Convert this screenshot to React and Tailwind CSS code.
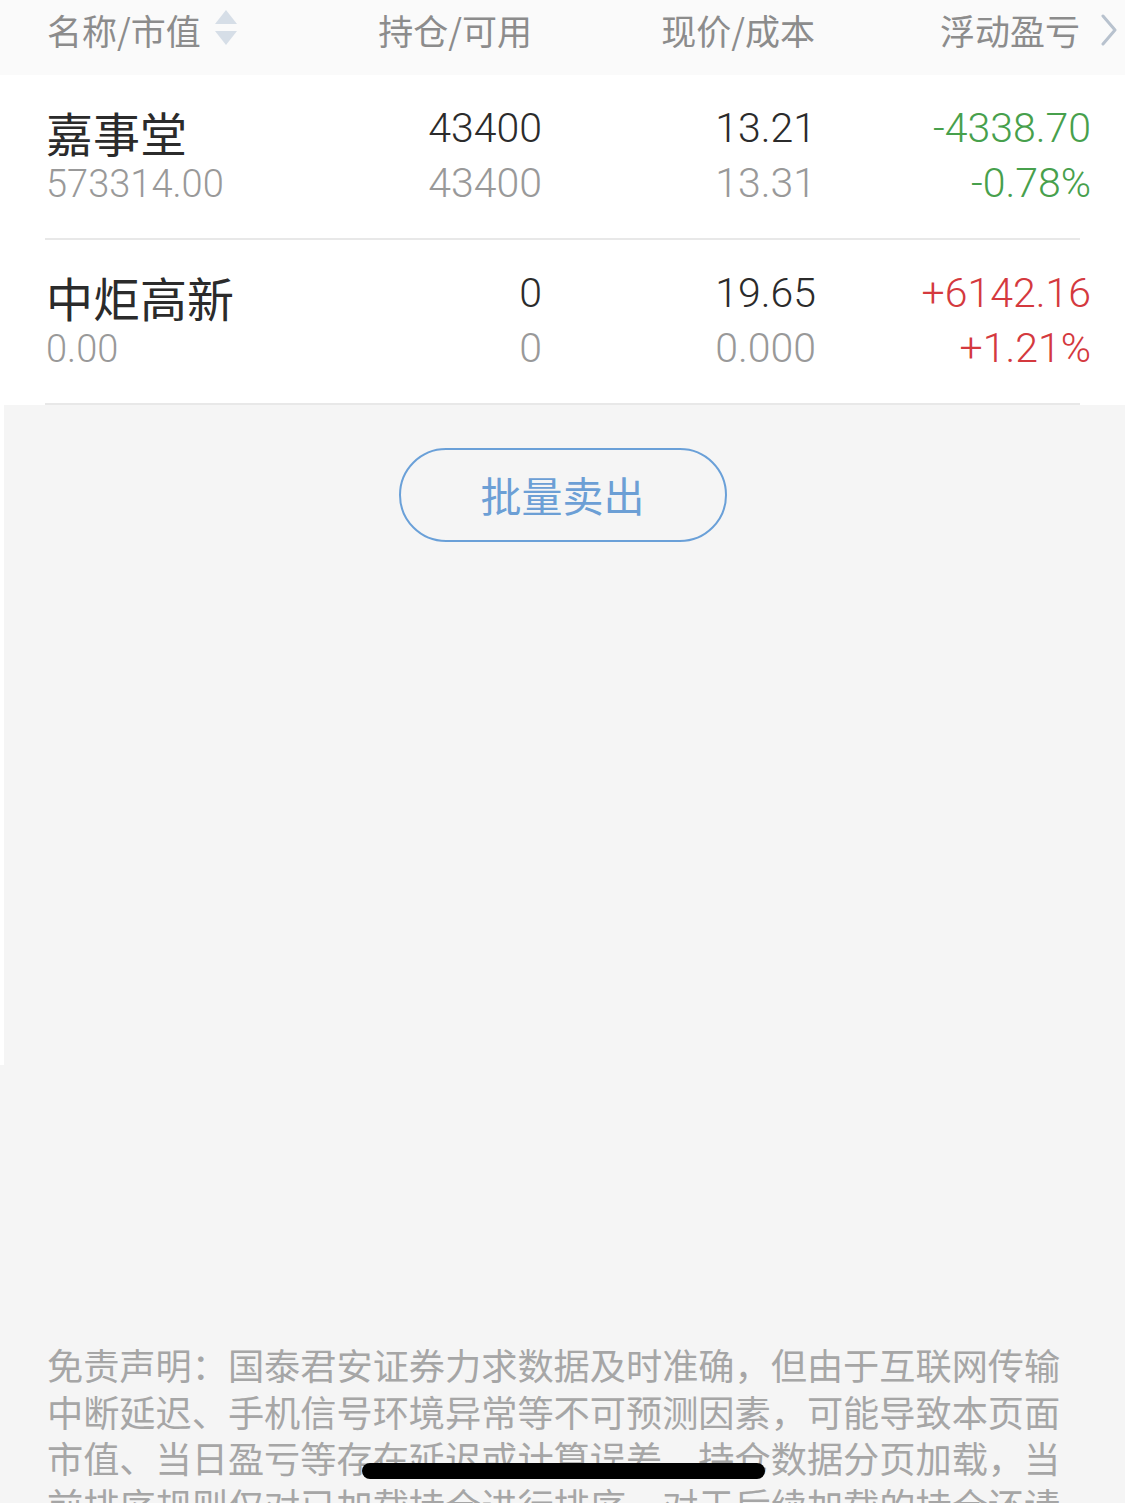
import React from "react";

const cjk = { fontFamily: '"Noto Sans CJK SC", "Noto Sans", sans-serif' };
const num = { fontFamily: 'Roboto, "Noto Sans", sans-serif' };

function SortIcon() {
  return (
    <svg width="22" height="36" viewBox="0 0 22 36" className="mt-[10px] ml-[14px] shrink-0">
      <polygon points="11,0 22,14 0,14" fill="#d6dee7" />
      <polygon points="0,21 22,21 11,35" fill="#d6dee7" />
    </svg>
  );
}

function Chevron() {
  return (
    <svg width="18" height="32" viewBox="0 0 18 32" className="mt-[14px] ml-[20px] shrink-0">
      <polyline points="3,2 15,16 3,30" fill="none" stroke="#b8c2ce" strokeWidth="3" strokeLinecap="round" strokeLinejoin="round" />
    </svg>
  );
}

function Row({ name, value, hold, avail, price, cost, pl, pct, color }) {
  return (
    <div className="bg-white">
      <div className="mx-[45px] h-[165px] border-b-2 border-[#e8e8e8] flex">
        <div className="w-[302px] shrink-0 pl-[1px] pt-[29px]">
          <div className="h-[56px] leading-[56px] text-[47px] text-[#2b2b2b]" style={cjk}>{name}</div>
          <div className="h-[48px] leading-[48px] text-[38px] font-light text-[#999999]" style={num}>{value}</div>
        </div>
        <div className="w-[195px] shrink-0 pt-[26px] text-right text-[41px] font-light" style={num}>
          <div className="h-[55px] leading-[55px] text-[#2b2b2b]">{hold}</div>
          <div className="h-[55px] leading-[55px] text-[#999999]">{avail}</div>
        </div>
        <div className="w-[274px] shrink-0 pt-[26px] text-right text-[41px] font-light" style={num}>
          <div className="h-[55px] leading-[55px] text-[#2b2b2b]">{price}</div>
          <div className="h-[55px] leading-[55px] text-[#999999]">{cost}</div>
        </div>
        <div className="w-[275px] shrink-0 pt-[26px] text-right text-[41px] font-light" style={{ ...num, color }}>
          <div className="h-[55px] leading-[55px]">{pl}</div>
          <div className="h-[55px] leading-[55px]">{pct}</div>
        </div>
      </div>
    </div>
  );
}

export default function App() {
  return (
    <div className="relative w-[1125px] h-[1503px] overflow-hidden bg-[#f5f5f5]">
      <div className="h-[75px] bg-[#fafafa] flex pl-[47px] text-[35px] text-[#8c8c8c]" style={cjk}>
        <div className="w-[300px] shrink-0 flex items-start">
          <span className="leading-[60px]">名称/市值</span>
          <SortIcon />
        </div>
        <div className="w-[185px] shrink-0 text-right leading-[60px]">持仓/可用</div>
        <div className="w-[283px] shrink-0 text-right leading-[60px]">现价/成本</div>
        <div className="w-[265px] shrink-0 text-right leading-[60px]">浮动盈亏</div>
        <Chevron />
      </div>
      <Row name="嘉事堂" value="573314.00" hold="43400" avail="43400" price="13.21" cost="13.31" pl="-4338.70" pct="-0.78%" color="#47a04c" />
      <Row name="中炬高新" value="0.00" hold="0" avail="0" price="19.65" cost="0.000" pl="+6142.16" pct="+1.21%" color="#d4393e" />
      <div className="flex">
        <div className="w-[4px] h-[660px] bg-white" />
        <div className="flex-1 flex flex-col items-center pt-[43px] pr-[4px]">
          <div className="w-[328px] h-[94px] rounded-full border-[2.5px] border-[#6aa0d8] flex items-center justify-center text-[41px] text-[#6c9fd5]" style={cjk}>
            批量卖出
          </div>
        </div>
      </div>
      <div className="mt-[276px] pl-[47px] w-[1082px] text-[36.2px] leading-[46.5px] text-[#a6a6a6]" style={cjk}>
        免责声明：国泰君安证券力求数据及时准确，但由于互联网传输中断延迟、手机信号环境异常等不可预测因素，可能导致本页面市值、当日盈亏等存在延迟或计算误差，持仓数据分页加载，当前排序规则仅对已加载持仓进行排序，对于后续加载的持仓还请以实际数据为准。
      </div>
      <div className="absolute left-[362px] top-[1463px] w-[403px] h-[16px] rounded-full bg-black" />
    </div>
  );
}
